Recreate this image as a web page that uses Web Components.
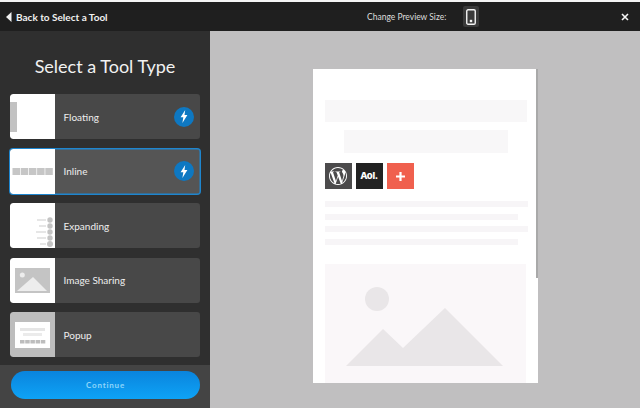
<!DOCTYPE html>
<html><head><meta charset="utf-8"><title>Select a Tool Type</title>
<style>
html,body{margin:0;height:100%;background:#c0bfc0;overflow:hidden}
body{font-family:"Lato","Open Sans",sans-serif;}
</style></head><body>
<tool-app>
  <top-bar slot="top"></top-bar>
  <side-panel slot="side">
    <tool-card label="Floating" kind="floating" bolt></tool-card>
    <tool-card label="Inline" kind="inline" bolt selected></tool-card>
    <tool-card label="Expanding" kind="expanding"></tool-card>
    <tool-card label="Image Sharing" kind="image"></tool-card>
    <tool-card label="Popup" kind="popup"></tool-card>
  </side-panel>
  <preview-pane slot="main"></preview-pane>
</tool-app>
<script>
function def(name,html,init){
  customElements.define(name,class extends HTMLElement{
    constructor(){super();this.attachShadow({mode:'open'}).innerHTML=html;}
    connectedCallback(){if(init)init(this);}
  });
}
def('tool-app',`<style>
:host{display:flex;flex-direction:column;width:640px;height:408px;overflow:hidden}
.t{flex:none;padding-top:2px;background:#f4f4f4}
.b{flex:1;display:flex;min-height:0}
</style><div class="t"><slot name="top"></slot></div><div class="b"><slot name="side"></slot><slot name="main"></slot></div>`);

def('top-bar',`<style>
:host{display:flex;align-items:center;height:29px;background:#1f1f1f;color:#eee;font-size:10px;box-sizing:border-box;padding:0 0 0 6px}
.back{display:flex;align-items:center;gap:4px;font-weight:700;width:361px;flex:none;white-space:nowrap;color:#f0f0f0;box-sizing:border-box}
.size{width:96px;flex:none;white-space:nowrap;color:#ddd;font-size:8.5px}
.dev{width:16px;height:21px;border-radius:2px;background:#3a3a3a;display:flex;align-items:center;justify-content:center;flex:none}
.sp{flex:1}
.x{width:12px;margin-right:7px;display:flex}
</style>
<div class="back"><svg width="6" height="10" viewBox="0 0 6 10"><path d="M5.5 0v10L0 5z" fill="#f0f0f0"/></svg><span>Back to Select a Tool</span></div>
<div class="size">Change Preview Size:</div>
<div class="dev"><svg width="10" height="16" viewBox="0 0 10 16"><rect x=".75" y=".75" width="8.5" height="14.5" rx="1.3" fill="none" stroke="#f4f4f4" stroke-width="1.4"/><rect x="3.8" y="10.8" width="2.4" height="2.4" fill="#f4f4f4"/></svg></div>
<div class="sp"></div>
<div class="x"><svg width="8" height="8" viewBox="0 0 8 8"><path d="M1 1l6 6M7 1L1 7" stroke="#f4f4f4" stroke-width="1.6"/></svg></div>`);

def('side-panel',`<style>
:host{display:flex;flex-direction:column;flex:none;width:210px;height:377px;background:#2f2f2f;color:#fff}
h1{margin:0;padding:23px 0 0;height:40px;font-size:18px;line-height:24px;font-weight:400;text-align:center;color:#f2f2f2;box-sizing:content-box}
.list{display:flex;flex-direction:column;gap:9.5px;padding:0 10px;flex:1}
.foot{height:43px;flex:none;background:#444;display:flex;align-items:flex-start;justify-content:center;padding:6px 10px 0 11px;box-sizing:border-box}
.btn{width:100%;height:28px;border-radius:14px;background:linear-gradient(#0a84dd,#0ea3f6);color:#8fd6fb;font-size:8px;font-weight:700;letter-spacing:.8px;display:flex;align-items:center;justify-content:center}
</style>
<h1>Select a Tool Type</h1>
<div class="list"><slot></slot></div>
<div class="foot"><div class="btn">Continue</div></div>`);

const thumbs={
floating:`<div style="width:7px;height:30px;background:#c2c2c2"></div>`,
inline:`<svg width="45" height="45" viewBox="0 0 45 45"><g fill="#c6c6c6"><rect x="2.5" y="19" width="7.5" height="7"/><rect x="10.7" y="19" width="7.5" height="7"/><rect x="18.9" y="19" width="7.5" height="7"/><rect x="27.1" y="19" width="7.5" height="7"/><rect x="35.3" y="19" width="7.5" height="7"/></g></svg>`,
expanding:`<svg width="45" height="45" viewBox="0 0 45 45"><g fill="#c4c4c4"><circle cx="40" cy="17" r="2.7"/><circle cx="40" cy="23" r="2.7"/><circle cx="40" cy="29" r="2.7"/><circle cx="40" cy="35" r="2.7"/><circle cx="40" cy="41" r="3"/></g><g fill="#e6e6e6"><rect x="27" y="16" width="9" height="2"/><rect x="29" y="22" width="7" height="2"/><rect x="26" y="28" width="10" height="2"/><rect x="27" y="34" width="9" height="2"/><rect x="30" y="40" width="6" height="2"/></g></svg>`,
image:`<svg width="45" height="45" viewBox="0 0 45 45"><rect x="5" y="10" width="35" height="25" fill="#c4c4c4"/><circle cx="12.3" cy="17" r="2.5" fill="#ededed"/><path d="M7 33L23 19 37 33z" fill="#ededed"/></svg>`,
popup:`<svg width="45" height="45" viewBox="0 0 45 45"><rect x="5" y="10" width="35" height="26" fill="#fff"/><rect x="10" y="16" width="25" height="3" fill="#e6e6e6"/><rect x="13" y="21" width="19" height="3" fill="#ebebeb"/><g fill="#bdbdbd"><rect x="10" y="28" width="4.5" height="3.5"/><rect x="15.2" y="28" width="4.5" height="3.5"/><rect x="20.4" y="28" width="4.5" height="3.5"/><rect x="25.6" y="28" width="4.5" height="3.5"/><rect x="30.8" y="28" width="4.5" height="3.5"/></g></svg>`
};
def('tool-card',`<style>
:host{display:flex;height:45px;flex:none;box-sizing:border-box;border-radius:3px;background:#484848;overflow:hidden;position:relative;color:#eee;font-size:10px;align-items:center}
:host([selected]){background:#555;box-shadow:0 0 0 1px #1e86cf,inset 0 0 0 .5px #1e86cf}
.th{width:45px;height:100%;background:#fff;flex:none;display:flex;align-items:center;border-radius:3px 0 0 3px}
:host([kind=popup]) .th{background:#bdbdbd}
.l{margin-left:8.5px;flex:1;white-space:nowrap}
.bolt{width:20px;height:20px;border-radius:50%;background:#0e78c2;margin-right:6px;display:none;align-items:center;justify-content:center}
:host([bolt]) .bolt{display:flex}
</style>
<div class="th"></div><div class="l"></div>
<div class="bolt"><svg width="8" height="13" viewBox="0 0 8 13"><path d="M5.2 0L.6 7.3h2.7L2.4 13 7.4 5H4.5z" fill="#fff"/></svg></div>`,
el=>{const s=el.shadowRoot;s.querySelector('.l').textContent=el.getAttribute('label');s.querySelector('.th').innerHTML=thumbs[el.getAttribute('kind')]||'';});

def('preview-pane',`<style>
:host{flex:1;display:flex;justify-content:center;align-items:flex-start;background:#c0bfc0;height:377px;padding:38px 0 0 0;box-sizing:border-box}
.page{width:225px;height:314px;background:#fff;overflow:hidden;position:relative;padding:31px 12px 0;box-sizing:border-box;display:flex;flex-direction:column}
.page>*{flex:none}
.scroll{position:absolute;right:0;top:0;width:2px;height:209px;background:#a9a9a9}
.b1{height:22px;width:202px;background:#f8f7f8}
.b2{height:23px;width:164px;background:#f8f7f8;margin:8px 0 0 19px}
.ic{display:flex;gap:4px;margin-top:10px}
.i{width:27px;height:26px;display:flex;align-items:center;justify-content:center;flex:none}
.ln{height:6px;background:#f7f5f7;margin-top:6.5px;width:203px}
.ln.s{width:193px}
.ic + .ln{margin-top:12px}
.pic{margin-top:19px;width:201px;height:140px;background:#faf7f9;flex:none;display:flex}
</style>
<div class="page">
<div class="b1"></div><div class="b2"></div>
<div class="ic">
<div class="i" style="background:#4c4b4c"><svg width="18" height="18" viewBox="0 0 24 24"><path fill="#fff" d="M21.469 6.825c.84 1.537 1.318 3.3 1.318 5.175 0 3.979-2.156 7.456-5.363 9.325l3.295-9.527c.615-1.54.82-2.771.82-3.864 0-.405-.026-.78-.07-1.11m-7.981.105c.647-.03 1.232-.105 1.232-.105.582-.075.514-.93-.067-.899 0 0-1.755.135-2.88.135-1.064 0-2.85-.15-2.85-.15-.585-.03-.661.855-.075.885 0 0 .54.061 1.125.09l1.68 4.605-2.37 7.08L5.354 6.9c.649-.03 1.234-.1 1.234-.1.585-.075.516-.93-.065-.896 0 0-1.746.138-2.874.138-.2 0-.438-.008-.69-.015C4.911 3.15 8.235 1.215 12 1.215c2.809 0 5.365 1.072 7.286 2.833-.046-.003-.091-.009-.141-.009-1.06 0-1.812.923-1.812 1.914 0 .89.513 1.643 1.06 2.531.411.72.89 1.643.89 2.977 0 .915-.354 1.994-.821 3.479l-1.075 3.585-3.9-11.61.001.014zM12 22.784c-1.059 0-2.081-.153-3.048-.437l3.237-9.406 3.315 9.087c.024.053.05.101.078.149-1.12.393-2.325.609-3.582.609M1.211 12c0-1.564.336-3.05.935-4.39L7.29 21.709C3.694 19.96 1.212 16.271 1.211 12M12 0C5.385 0 0 5.385 0 12s5.385 12 12 12 12-5.385 12-12S18.615 0 12 0"/></svg></div>
<div class="i" style="background:#222;color:#fff;font:800 9.5px/1 'Inter','Liberation Sans',sans-serif;letter-spacing:-.3px">Aol.</div>
<div class="i" style="background:#f0604e"><svg width="11" height="11" viewBox="0 0 11 11"><path d="M5.5 1v9M1 5.5h9" stroke="#fff" stroke-width="2.2"/></svg></div>
</div>
<div class="ln"></div><div class="ln s"></div><div class="ln"></div><div class="ln s"></div>
<div class="pic"><svg width="201" height="140" viewBox="0 0 201 140"><circle cx="52" cy="35" r="12" fill="#e9e6e8"/><path d="M21 102L58 65 78 84 120 44 178 102z" fill="#e9e6e8"/></svg></div>
<div class="scroll"></div>
</div>`);
</script>
</body></html>
